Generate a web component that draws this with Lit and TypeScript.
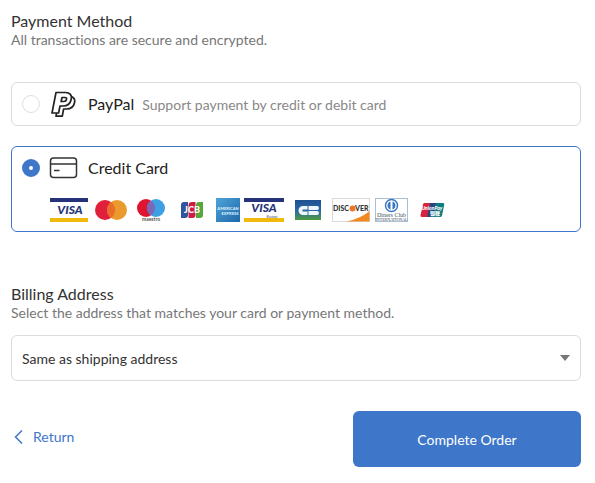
import { LitElement, html, svg, css } from "lit";
import { customElement, state } from "lit/decorators.js";

const visaCard = (baseline: number) => svg`
  <rect width="40" height="24" fill="#fff"/>
  <rect width="40" height="4" fill="#26337a"/>
  <rect y="20" width="40" height="4" fill="#f0b90b"/>
  <text x="20" y=${baseline} text-anchor="middle" font-size="12" font-weight="900" font-style="italic" fill="#26337a">VISA</text>`;

const brands = [
  { name: "Visa", width: 38, art: visaCard(16) },
  {
    name: "Mastercard",
    width: 38,
    art: svg`
      <circle cx="13" cy="12" r="10" fill="#e0203a"/>
      <circle cx="25" cy="12" r="10" fill="#eb9a2d"/>
      <path d="M19 4a10 10 0 0 1 0 16a10 10 0 0 1 0-16z" fill="#ec6a2c"/>`,
  },
  {
    name: "Maestro",
    width: 34,
    art: svg`
      <circle cx="12" cy="10" r="9" fill="#df1530"/>
      <circle cx="22" cy="10" r="9" fill="#3f9fe3"/>
      <path d="M17 2.500a9 9 0 0 1 0 15a9 9 0 0 1 0-15z" fill="#7b68b8"/>
      <text x="17" y="23" text-anchor="middle" font-size="5" font-weight="700" fill="#555">maestro</text>`,
  },
  {
    name: "JCB",
    width: 40,
    art: svg`
      <path d="M12 4h4v13q0 3-3 3h-4V7q0-3 3-3z" fill="#31549f"/>
      <path d="M20 4h3.500v13q0 3-3 3h-4V7q0-3 3.500-3z" fill="#cb1d42"/>
      <path d="M27 4h4v13q0 3-3 3h-4V7q0-3 3-3z" fill="#56a63c"/>
      <text x="20" y="15" text-anchor="middle" font-size="9" font-weight="900" fill="#fff">JCB</text>`,
  },
  {
    name: "American Express",
    width: 24,
    art: svg`
      <defs><linearGradient id="amex" x1="0" y1="0" x2="1" y2="1">
        <stop offset="0" stop-color="#4fa3d8"/><stop offset="1" stop-color="#1e68a9"/>
      </linearGradient></defs>
      <rect width="24" height="24" fill="url(#amex)"/>
      <text x="12" y="12" text-anchor="middle" font-size="4" font-weight="900" fill="#d7ecf9">AMERICAN</text>
      <text x="14" y="17" text-anchor="middle" font-size="4" font-weight="900" fill="#d7ecf9">EXPRESS</text>`,
  },
  {
    name: "Visa Electron",
    width: 40,
    art: svg`${visaCard(14)}<text x="28" y="20" text-anchor="middle" font-size="3" fill="#26337a">Electron</text>`,
  },
  {
    name: "Carte Bancaire",
    width: 40,
    art: svg`
      <defs><linearGradient id="cb" x1="0" y1="0" x2="0" y2="1">
        <stop offset="0" stop-color="#20508f"/><stop offset=".5" stop-color="#2867a8"/><stop offset="1" stop-color="#4d9b3e"/>
      </linearGradient></defs>
      <rect x="7" y="2" width="26" height="20" fill="url(#cb)"/>
      <path d="M19.500 11.500V8H15a4.500 4.500 0 0 0 0 9h4.500v-3.500h-5v-2z" fill="#eef5fb"/>
      <path d="M20.500 8H29a2 2 0 0 1 0 4h-8.500zM20.500 13H29a2 2 0 0 1 0 4h-8.500z" fill="#eef5fb"/>`,
  },
  {
    name: "Discover",
    width: 38,
    art: svg`
      <rect x=".5" y=".5" width="37" height="23" fill="#fff" stroke="#dadada"/>
      <path d="M14 23.500C23 22 32 18 37.500 13v10.500z" fill="#f28a24"/>
      <text x="1" y="13" font-size="7" font-weight="900" fill="#333">DISC</text>
      <circle cx="20.500" cy="10.500" r="3" fill="#ee7623"/>
      <text x="23" y="13" font-size="7" font-weight="900" fill="#333">VER</text>`,
  },
  {
    name: "Diners Club International",
    width: 34,
    art: svg`
      <rect x="1.500" y=".5" width="32" height="23" fill="#fff" stroke="#a9bfd6"/>
      <circle cx="17.500" cy="7.500" r="6" fill="#fff" stroke="#3a77bf" stroke-width="1.500"/>
      <path d="M16.500 3.500a4.200 4.200 0 0 0 0 8zM18.500 3.500a4.200 4.200 0 0 1 0 8z" fill="#3a77bf"/>
      <text class="serif" x="17.500" y="18.500" text-anchor="middle" font-size="6" fill="#456">Diners Club</text>
      <text class="serif" x="17.500" y="22.500" text-anchor="middle" font-size="4" fill="#345">INTERNATIONAL</text>`,
  },
  {
    name: "UnionPay",
    width: 40,
    art: svg`
      <path d="M12 5h7l-3 14h-6q-2 0-1.500-2L11 6.500Q11.400 5 12 5z" fill="#d8213d"/>
      <path d="M18 5h7l-3 14h-7z" fill="#27477f"/>
      <path d="M24 5h7q1.600 0 1.200 2L30 17.500q-.4 1.500-2 1.500h-7z" fill="#0c7c80"/>
      <text x="20" y="12" text-anchor="middle" font-size="5" font-weight="900" font-style="italic" fill="#fff">UnionPay</text>
      <text x="23" y="17" text-anchor="middle" font-size="5" font-weight="900" fill="#fff">银联</text>`,
  },
];

@customElement("app-root")
export class AppRoot extends LitElement {
  @state() private method = "card";

  static styles = css`
    :host {
      display: block;
      padding: 11px 14px 16px 11px;
      background: #fff;
      color: #333;
      font: 14px/18px Lato, "Noto Sans CJK SC", sans-serif;
      font-variant-ligatures: none;
    }
    * { box-sizing: border-box; }
    h2 { margin: 0; font-size: 16px; line-height: 20px; font-weight: 400; }
    .hint { margin: 0; color: #777; }
    .methods { display: grid; gap: 20px; margin: 33px 0 52px; padding: 0; border: 0; min-width: 0; }
    .option { border: 1px solid #dcdcde; border-radius: 6px; }
    .option.selected { border-color: #3e76ca; }
    .row { display: flex; align-items: center; height: 42px; padding: 0 10px; cursor: pointer; }
    .row input {
      appearance: none;
      width: 18px;
      height: 18px;
      margin: 0 9px 0 0;
      border: 1px solid #dedee6;
      border-radius: 50%;
      background: #fff;
    }
    .row input:checked { border: 7px solid #3e76ca; }
    .row svg { width: 29px; height: 28px; margin-right: 10px; flex: none; }
    .words { display: flex; align-items: baseline; gap: 8px; }
    .name { font-size: 16px; line-height: 20px; color: #222; }
    .note { color: #888; }
    .brands { display: flex; flex-wrap: wrap; gap: 4px; margin: 0; padding: 9px 0 9px 38px; list-style: none; }
    .brands li, .brands svg { display: block; }
    .brands text { font-family: Lato, "Noto Sans CJK SC", sans-serif; }
    .brands .serif { font-family: "Liberation Serif", serif; }
    .picker { position: relative; margin: 13px 0 30px; }
    select {
      appearance: none;
      display: block;
      width: 100%;
      height: 46px;
      padding: 2px 32px 0 10px;
      border: 1px solid #dcdcde;
      border-radius: 6px;
      background: #fff;
      color: #333;
      font: inherit;
    }
    .arrow {
      position: absolute;
      right: 11px;
      top: 20px;
      border: 5px solid transparent;
      border-top: 6px solid #777;
      border-bottom: 0;
      pointer-events: none;
    }
    .actions { display: flex; align-items: center; justify-content: space-between; }
    .back { display: flex; align-items: center; gap: 10px; padding: 0 0 4px 3px; color: #3e76ca; text-decoration: none; }
    .submit {
      width: 40%;
      height: 56px;
      padding: 2px 0 0;
      border: 0;
      border-radius: 6px;
      background: #3e76ca;
      color: #fff;
      font: inherit;
    }
  `;

  private pick(id: string) {
    this.method = id;
  }

  private row(id: string, name: string, icon: unknown, note = "") {
    return html`<label class="row">
      <input type="radio" name="method" .checked=${this.method === id} @change=${() => this.pick(id)} />
      <svg viewBox="0 0 29 28" fill="none" aria-hidden="true">${icon}</svg>
      <span class="words">
        <span class="name">${name}</span>
        ${note ? html`<span class="note">${note}</span>` : ""}
      </span>
    </label>`;
  }

  render() {
    const paypal = svg`<g stroke="#222" stroke-width="1.700" stroke-linejoin="round">
      <path d="M7 2.500h9.500c4.500 0 6.600 2.700 5.800 6.500-.9 4.500-4 7-8.300 7h-3l-1.400 7H3z"/>
      <path d="M13 7.500h3c1.400 0 1.800.8 1.500 2-.3 1.300-1.200 2-2.600 2h-2.800z"/>
      <path d="M22.500 6.500c2.700 1.200 3.700 3.200 3.100 6-.9 4.200-3.900 6.500-8.100 6.500h-2.900l-1.300 7.200H7l.6-3.200"/>
    </g>`;
    const card = svg`<g stroke="#333" stroke-width="1.500">
      <rect x="1.500" y="4" width="26" height="19.500" rx="3"/>
      <path d="M1.500 10h26M5 16.500h5.500"/>
    </g>`;
    return html`
      <h2>Payment Method</h2>
      <p class="hint">All transactions are secure and encrypted.</p>
      <fieldset class="methods" aria-label="Payment Method">
        <div class="option ${this.method === "paypal" ? "selected" : ""}">
          ${this.row("paypal", "PayPal", paypal, "Support payment by credit or debit card")}
        </div>
        <div class="option ${this.method === "card" ? "selected" : ""}">
          ${this.row("card", "Credit Card", card)}
          <ul class="brands">
            ${brands.map(
              (b) => html`<li>
                <svg width=${b.width} height="24" viewBox="0 0 ${b.width} 24" role="img" aria-label=${b.name}>${b.art}</svg>
              </li>`
            )}
          </ul>
        </div>
      </fieldset>
      <h2 id="billing">Billing Address</h2>
      <p class="hint">Select the address that matches your card or payment method.</p>
      <div class="picker">
        <select aria-labelledby="billing">
          <option>Same as shipping address</option>
        </select>
        <span class="arrow"></span>
      </div>
      <div class="actions">
        <a class="back" href="#">
          <svg width="9" height="14" viewBox="0 0 9 14" fill="none" stroke="#3e76ca" stroke-width="1.500" aria-hidden="true"><path d="M8 .5 1.500 7 8 13.500"/></svg>
          Return
        </a>
        <button class="submit" type="button">Complete Order</button>
      </div>
    `;
  }
}
